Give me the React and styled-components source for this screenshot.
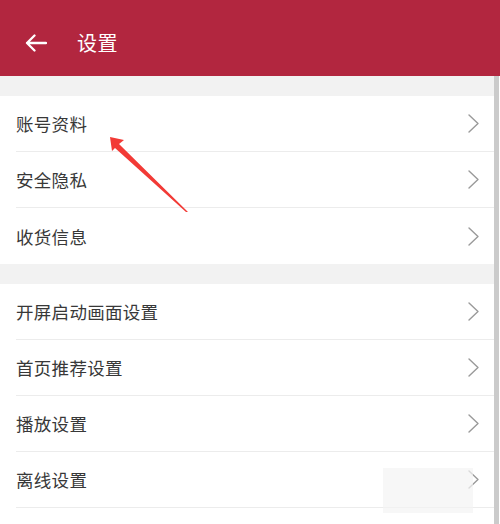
import styled, { createGlobalStyle } from "styled-components";

const GlobalStyle = createGlobalStyle`
  html, body {
    margin: 0;
    padding: 0;
    background: #ffffff;
  }
  body {
    font-family: "Noto Sans CJK SC", "Noto Sans", sans-serif;
  }
`

const Page = styled.div`
  width: 500px;
  height: 524px;
  position: relative;
  overflow: hidden;
  background: #ffffff;
`
const Header = styled.div`
  height: 76px;
  background: #b2263f;
  display: flex;
  align-items: center;
  padding: 9px 0 0 25px;
  box-sizing: border-box;
  color: #ffffff;
`
const Back = styled.div`
  width: 22px;
  height: 20px;
  display: flex;
  align-items: center;
  margin-right: 30px;
`
const Title = styled.div`
  font-size: 20px;
  letter-spacing: 0.5px;
  margin-top: -1px;
`
const Body = styled.div`
  display: flex;
`
const Content = styled.div`
  flex: 1;
`
const Scrollbar = styled.div`
  width: 5px;
  margin-right: 1px;
  background: #cbcbcb;
  height: 448px;
`
const Band = styled.div`
  height: 20px;
  background: #f2f2f2;
`
const Row = styled.div`
  height: 56px;
  margin-left: 16px;
  padding-right: 15px;
  display: flex;
  align-items: center;
  justify-content: space-between;
  box-sizing: border-box;
  border-bottom: ${p => (p.$last ? "none" : "1px solid #ececec")};
`
const Label = styled.span`
  font-size: 17.5px;
  color: #383838;
  letter-spacing: 0.3px;
`
const Chevron = styled.svg`
  width: 11px;
  height: 19px;
  flex-shrink: 0;
`
const Pointer = styled.svg`
  position: absolute;
  left: 100px;
  top: 130px;
  width: 100px;
  height: 90px;
`
const Smudge = styled.div`
  position: absolute;
  left: 383px;
  top: 468px;
  width: 90px;
  height: 45px;
  background: rgba(243, 243, 243, 0.7);
`

const Arrow = () => (
  <Chevron viewBox="0 0 11 19">
    <path d="M1 1 L10 9.5 L1 18" fill="none" stroke="#9a9a9a" strokeWidth="1.4" strokeLinecap="round" strokeLinejoin="round" />
  </Chevron>
)

const groups = [
  ["账号资料", "安全隐私", "收货信息"],
  ["开屏启动画面设置", "首页推荐设置", "播放设置", "离线设置"],
]

const App = () => {
  return (
    <Page>
      <GlobalStyle />
      <Header>
        <Back>
          <svg width="22" height="18" viewBox="0 0 22 18">
            <path d="M21 9 H2 M9.5 1.5 L2 9 L9.5 16.5" fill="none" stroke="#ffffff" strokeWidth="2.3" strokeLinecap="round" strokeLinejoin="round" />
          </svg>
        </Back>
        <Title>设置</Title>
      </Header>
      <Body>
        <Content>
          {groups.map((items, g) => (
            <div key={g}>
              <Band />
              {items.map((item, i) => (
                <Row key={item} $last={g === 0 && i === items.length - 1}>
                  <Label>{item}</Label>
                  <Arrow />
                </Row>
              ))}
            </div>
          ))}
        </Content>
        <Scrollbar />
      </Body>
      <Pointer viewBox="0 0 100 90">
        <polygon points="10,7 24,10 19,14 88,82 86,82 15,18 12,21" fill="#f23a36" />
      </Pointer>
      <Smudge />
    </Page>
  )
}

export default App
